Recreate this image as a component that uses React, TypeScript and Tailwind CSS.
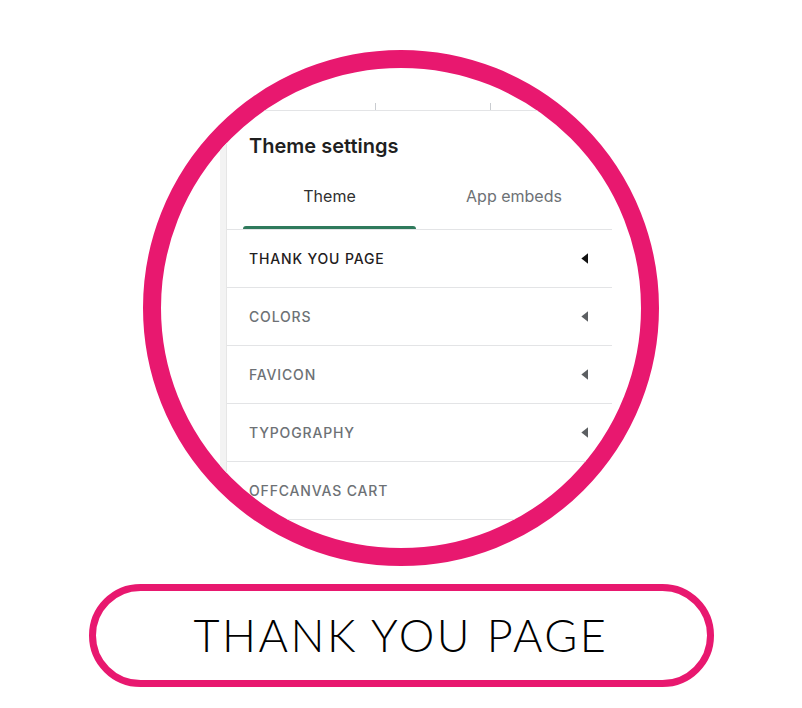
import React from "react";

const rows = [
  { label: "THANK YOU PAGE", active: true },
  { label: "COLORS" },
  { label: "FAVICON" },
  { label: "TYPOGRAPHY" },
  { label: "OFFCANVAS CART" },
];

function Caret({ dark }: { dark?: boolean }) {
  return (
    <svg width="7" height="11" viewBox="0 0 7 11" className="shrink-0">
      <path d="M7 0.3 L0.4 5.5 L7 10.7 Z" fill={dark ? "#111111" : "#5c5f62"} />
    </svg>
  );
}

export default function App() {
  return (
    <div
      className="w-[802px] h-[708px] bg-white flex flex-col items-center"
      style={{ fontFamily: "Inter, 'Noto Sans', sans-serif" }}
    >
      <div className="mt-[50px] w-[516px] h-[516px] shrink-0 rounded-full border-[18px] border-[#e8186f] overflow-hidden bg-white">
        <div className="flex flex-col h-full">
          {/* top toolbar remnant */}
          <div className="h-[43px] shrink-0 ml-[66px] w-[420px] border-b border-[#e3e4e6] flex items-end">
            <div className="w-[148px]" />
            <div className="w-px h-[7px] bg-[#c9ccd0]" />
            <div className="w-[114px]" />
            <div className="w-px h-[7px] bg-[#c9ccd0]" />
          </div>
          <div className="flex flex-1 ml-[59px]">
            <div className="w-[7px] bg-[#f3f3f3] border-r border-[#e6e6e6]" />
            <div className="w-[385px] flex flex-col">
              <div className="pt-[23px] pl-[22px] text-[20px] leading-6 font-semibold text-[#1f1f1f]">
                Theme settings
              </div>
              <div className="flex pl-[16px] border-b border-[#e3e4e6]">
                <div className="w-[173px] h-[71px] flex flex-col items-center">
                  <div className="mt-[26px] text-[16px] leading-6 text-[#303030]">Theme</div>
                  <div className="mt-auto w-full h-[3px] rounded-t-[3px] bg-[#2f7a5c]" />
                </div>
                <div className="w-[196px] h-[71px] flex flex-col items-center">
                  <div className="mt-[26px] text-[16px] leading-6 text-[#6d7175]">App embeds</div>
                </div>
              </div>
              {rows.map((r) => (
                <div
                  key={r.label}
                  className="h-[58px] shrink-0 border-b border-[#e3e4e6] flex items-center justify-between pl-[22px] pr-[24px]"
                >
                  <span
                    className={
                      "text-[14px] font-medium tracking-[0.06em] " +
                      (r.active ? "text-[#1f2021]" : "text-[#6d7175]")
                    }
                  >
                    {r.label}
                  </span>
                  <Caret dark={r.active} />
                </div>
              ))}
            </div>
          </div>
        </div>
      </div>
      <div className="mt-[18px] w-[625px] h-[103px] shrink-0 rounded-full border-[7px] border-[#e8186f] flex items-center justify-center">
        <span
          className="text-[45px] font-light tracking-[0.055em] text-black leading-none"
          style={{ fontFamily: "Lato, sans-serif" }}
        >
          THANK YOU PAGE
        </span>
      </div>
    </div>
  );
}
